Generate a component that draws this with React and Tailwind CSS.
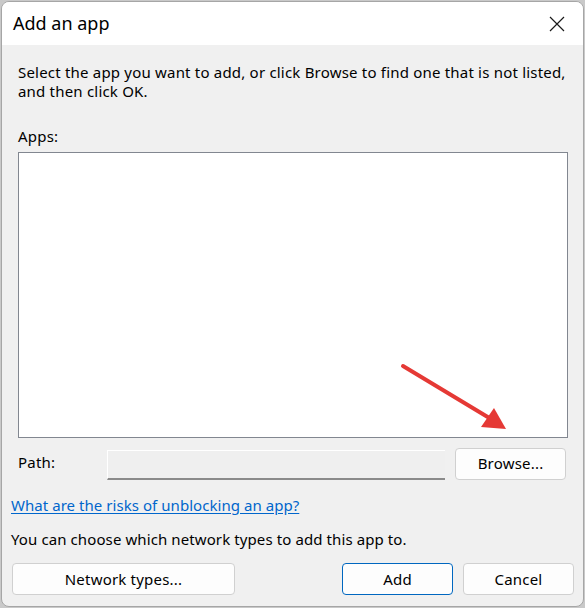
import React from "react";

const font = { fontFamily: '"Segoe UI", "Noto Sans", "Open Sans", sans-serif' };

function CloseIcon() {
  return (
    <svg width="16" height="16" viewBox="0 0 16 16" fill="none">
      <path d="M1 1 L15 15 M15 1 L1 15" stroke="#1a1a1a" strokeWidth="1.2" />
    </svg>
  );
}

function Button({ children, primary, className = "" }) {
  return (
    <button
      className={
        "h-[32px] rounded-[4px] bg-[#fdfdfd] text-[15px] tracking-[0.2px] text-black " +
        (primary ? "border border-[#0067c0] " : "border border-[#d0d0d0] ") +
        className
      }
    >
      {children}
    </button>
  );
}

export default function App() {
  return (
    <div className="w-[585px] h-[608px] bg-[#c9c9c9] pl-[1px] pt-[1px]" style={font}>
      <div className="relative w-[583px] h-[606px] rounded-[8px] border border-[#a6a6a6] bg-[#f0f0f0] overflow-hidden flex flex-col">
        {/* title bar */}
        <div className="h-[43px] bg-white flex items-center justify-between pl-[11px] pr-[18px] shrink-0">
          <span className="text-[18px] text-black">Add an app</span>
          <CloseIcon />
        </div>

        {/* body */}
        <div className="flex flex-col pl-[16px] pr-[15px] text-[15px] tracking-[0.2px]">
          <p className="mt-[18px] leading-[19px] text-black">
            Select the app you want to add, or click Browse to find one that is not listed,
            <br />
            and then click OK.
          </p>
          <div className="mt-[25px] leading-[20px] text-black">Apps:</div>
          <div className="mt-[6px] h-[286px] bg-white border border-[#828790]" />

          <div className="mt-[9px] flex items-center">
            <span className="w-[89px] -mt-[2px] text-black">Path:</span>
            <div className="mt-[3px] w-[338px] h-[30px] bg-[#efefef] border-t border-l border-white border-b-2 border-b-[#8a8a8a]" />
            <Button className="ml-[10px] w-[111px]">Browse...</Button>
          </div>
        </div>

        <div className="flex flex-col pl-[9px] pr-[9px] text-[15px]">
          <a className="mt-[15px] leading-[20px] tracking-[0.05px] text-[#0066cc] underline underline-offset-2">
            What are the risks of unblocking an app?
          </a>
          <p className="mt-[14px] leading-[20px] tracking-[0.1px] text-black">
            You can choose which network types to add this app to.
          </p>
          <div className="mt-[14px] flex items-center">
            <Button className="ml-[1px] w-[223px]">Network types...</Button>
            <div className="flex-1" />
            <Button primary className="w-[111px]">Add</Button>
            <Button className="ml-[10px] w-[111px]">Cancel</Button>
          </div>
        </div>

        {/* annotation arrow */}
        <svg className="absolute left-0 top-0 pointer-events-none" width="583" height="606">
          <line x1="401" y1="364" x2="489" y2="417" stroke="#e53935" strokeWidth="4" strokeLinecap="round" />
          <polygon points="504,427 479,425 492,406" fill="#e53935" />
        </svg>
      </div>
    </div>
  );
}
